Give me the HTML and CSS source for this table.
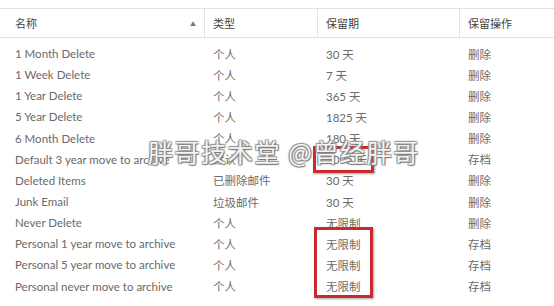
FILE: index.html
```html
<!DOCTYPE html>
<html lang="zh">
<head>
<meta charset="utf-8">
<link rel="stylesheet" href="styles.css">
</head>
<body>
<div class="page">
  <div class="head">
    <div class="hd first"><span>名称</span><span class="sort">▲</span></div>
    <div class="hd">类型</div>
    <div class="hd">保留期</div>
    <div class="hd last">保留操作</div>
  </div>
  <div class="body">
    <div class="c first">1 Month Delete</div><div class="c">个人</div><div class="c">30 天</div><div class="c">删除</div>
    <div class="c first">1 Week Delete</div><div class="c">个人</div><div class="c">7 天</div><div class="c">删除</div>
    <div class="c first">1 Year Delete</div><div class="c">个人</div><div class="c">365 天</div><div class="c">删除</div>
    <div class="c first">5 Year Delete</div><div class="c">个人</div><div class="c">1825 天</div><div class="c">删除</div>
    <div class="c first">6 Month Delete</div><div class="c">个人</div><div class="c">180 天</div><div class="c">删除</div>
    <div class="c first">Default 3 year move to archive</div><div class="c">默认</div><div class="c">1095 天</div><div class="c">存档</div>
    <div class="c first">Deleted Items</div><div class="c">已删除邮件</div><div class="c">30 天</div><div class="c">删除</div>
    <div class="c first">Junk Email</div><div class="c">垃圾邮件</div><div class="c">30 天</div><div class="c">删除</div>
    <div class="c first">Never Delete</div><div class="c">个人</div><div class="c">无限制</div><div class="c">删除</div>
    <div class="c first">Personal 1 year move to archive</div><div class="c">个人</div><div class="c">无限制</div><div class="c">存档</div>
    <div class="c first">Personal 5 year move to archive</div><div class="c">个人</div><div class="c">无限制</div><div class="c">存档</div>
    <div class="c first">Personal never move to archive</div><div class="c">个人</div><div class="c">无限制</div><div class="c">存档</div>
  </div>
  <div class="box box1"></div>
  <div class="box box2"></div>
  <div class="watermark">胖哥技术堂 @曾经胖哥</div>
</div>
</body>
</html>
```
FILE: styles.css
```css
html, body {
  margin: 0;
  padding: 0;
  background: #fff;
}
.page {
  position: relative;
  width: 554px;
  height: 306px;
  overflow: hidden;
  padding-top: 8px;
  box-sizing: border-box;
  font-family: Lato, "Noto Sans CJK SC", sans-serif;
  font-size: 11.5px;
  color: #6a6a6a;
}
.head, .body {
  display: grid;
  grid-template-columns: 205px 113px 142px 1fr;
}
.head {
  border-top: 1px solid #e2e2e2;
  border-bottom: 1px solid #e2e2e2;
  height: 28px;
}
.hd {
  display: flex;
  align-items: center;
  justify-content: space-between;
  padding-left: 8px;
  padding-right: 6px;
  color: #444;
  border-right: 1px solid #e2e2e2;
  font-size: 11px;
}
.hd.first { padding-left: 15px; padding-right: 8px; }
.hd.last { border-right: none; }
.sort {
  font-size: 6px;
  color: #777;
}
.body {
  padding-top: 5px;
  grid-auto-rows: 21.15px;
}
.c {
  display: flex;
  align-items: center;
  padding-left: 8px;
  white-space: nowrap;
}
.c.first { padding-left: 15px; }
.box {
  position: absolute;
  border: 3px solid #c92a2f;
  box-shadow: 1px 1px 2px rgba(0,0,0,0.35);
}
.box1 { left: 313px; top: 146px; width: 55px; height: 21px; }
.box2 { left: 314px; top: 227px; width: 53px; height: 65px; }
.watermark {
  position: absolute;
  left: 148px;
  top: 133px;
  font-family: "Noto Sans CJK SC", sans-serif;
  font-size: 25px;
  letter-spacing: 1.6px;
  color: rgba(255,255,255,0.92);
  text-shadow: 1px 1px 1px #777, -1px -1px 1px #999, 1px -1px 1px #999, -1px 1px 1px #999;
  white-space: nowrap;
}
```
